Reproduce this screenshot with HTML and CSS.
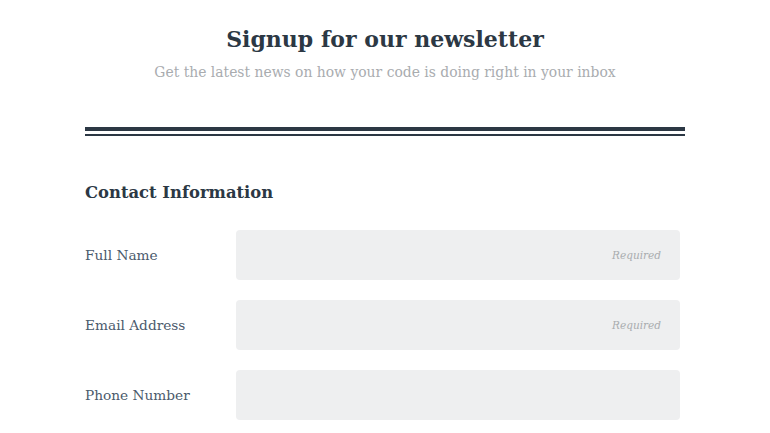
FILE: index.html
```html
<!DOCTYPE html>
<html>
<head>
<meta charset="utf-8">
<link rel="stylesheet" href="styles.css">
</head>
<body>
<div class="page">
  <header class="hero">
    <h1 class="title">Signup for our newsletter</h1>
    <p class="subtitle">Get the latest news on how your code is doing right in your inbox</p>
  </header>
  <div class="rule"></div>
  <section class="section">
    <h2 class="section-title">Contact Information</h2>
    <div class="row">
      <label class="label">Full Name</label>
      <div class="field"><span class="hint">Required</span></div>
    </div>
    <div class="row">
      <label class="label">Email Address</label>
      <div class="field"><span class="hint">Required</span></div>
    </div>
    <div class="row">
      <label class="label">Phone Number</label>
      <div class="field"></div>
    </div>
  </section>
</div>
</body>
</html>
```
FILE: styles.css
```css
html, body {
  margin: 0;
  padding: 0;
  background: #ffffff;
}
body {
  font-family: "DejaVu Serif", "Liberation Serif", serif;
  color: #2c3a47;
}
.page {
  width: 600px;
  margin: 0 auto;
  padding-top: 22px;
}
.hero {
  text-align: center;
}
.title {
  margin: 0;
  font-size: 22px;
  line-height: 34px;
  font-weight: bold;
  color: #2c3844;
}
.subtitle {
  margin: 6px 0 0;
  font-size: 13.9px;
  line-height: 20px;
  color: #a9acaf;
}
.rule {
  margin-top: 45px;
  height: 3px;
  border-top: 4px solid #2c3844;
  border-bottom: 2px solid #2c3844;
}
.section-title {
  margin: 44px 0 0;
  font-size: 16.4px;
  line-height: 26px;
  font-weight: bold;
  color: #2c3844;
}
.row {
  display: flex;
  align-items: center;
  margin-top: 20px;
}
.section-title + .row {
  margin-top: 24px;
}
.label {
  width: 151px;
  font-size: 13.7px;
  color: #4b5a6c;
}
.field {
  width: 444px;
  height: 50px;
  background: #eeeff0;
  border-radius: 4px;
  display: flex;
  align-items: center;
  justify-content: flex-end;
  padding-right: 19px;
  box-sizing: border-box;
}
.hint {
  font-style: italic;
  font-size: 10.5px;
  color: #a9acaf;
}
```
